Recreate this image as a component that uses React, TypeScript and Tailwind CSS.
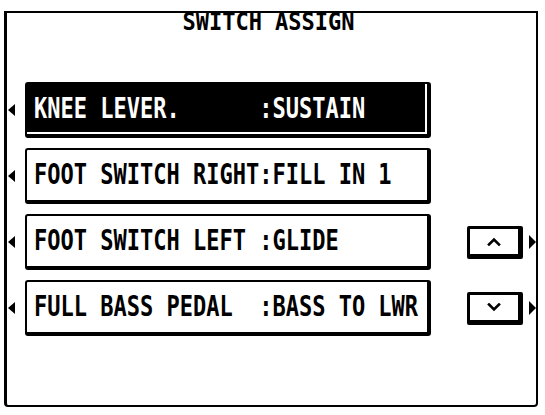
import React from "react";

type Row = { text: string; selected?: boolean; button?: "up" | "down" };

const rows: Row[] = [
  { text: "KNEE LEVER.      :SUSTAIN", selected: true },
  { text: "FOOT SWITCH RIGHT:FILL IN 1" },
  { text: "FOOT SWITCH LEFT :GLIDE", button: "up" },
  { text: "FULL BASS PEDAL  :BASS TO LWR", button: "down" },
];

const lcd = "font-['DejaVu_Sans_Mono','Liberation_Mono',monospace] font-bold text-[22px] leading-[22px] whitespace-pre";

function LeftArrow() {
  return <span className="ml-[1px] h-0 w-0 border-y-[6px] border-r-[7px] border-y-transparent border-r-black" />;
}

function RightArrow() {
  return <span className="ml-[6px] h-0 w-0 border-y-[7px] border-l-[7px] border-y-transparent border-l-black" />;
}

function ScrollButton({ dir }: { dir: "up" | "down" }) {
  return (
    <div className="ml-[36px] flex h-[33px] w-[56px] items-center justify-center rounded-[2px] border-t-[3px] border-l-[3px] border-r-[5px] border-b-[5px] border-black bg-white">
      <svg width="16" height="9" viewBox="0 0 16 9" fill="none" stroke="black" strokeWidth="2.6" strokeLinecap="square">
        {dir === "up" ? <path d="M3 7.5 L8 2.5 L13 7.5" /> : <path d="M3 1.5 L8 6.5 L13 1.5" />}
      </svg>
    </div>
  );
}

function AssignRow({ row }: { row: Row }) {
  return (
    <div className="flex h-[56px] items-center">
      <LeftArrow />
      <div
        className={
          row.selected
            ? "ml-[10px] flex h-full w-[406px] items-center rounded-[3px] border-t-2 border-l-2 border-r-[4px] border-b-[4px] border-black bg-black pl-[7px] text-white shadow-[inset_-2px_-2px_0_#fff]"
            : "ml-[10px] flex h-full w-[406px] items-center rounded-[3px] border-t-2 border-l-2 border-r-[4px] border-b-[4px] border-black bg-white pl-[7px] text-black"
        }
      >
        <span className={`${lcd} inline-block scale-y-[1.3]`}>{row.text}</span>
      </div>
      {row.button && (
        <>
          <ScrollButton dir={row.button} />
          <RightArrow />
        </>
      )}
    </div>
  );
}

export default function App() {
  return (
    <div className="h-[415px] w-[545px] overflow-hidden bg-white pt-[11px] pl-[4px]">
      <div className="flex h-[396px] w-[534px] flex-col rounded-b-[4px] border-t-2 border-l-[3px] border-r-2 border-b-2 border-black">
        <div className="-mt-[2px] flex h-[22px] justify-center pr-[6px] text-black">
          <span className={`${lcd} inline-block scale-y-[1.15]`}>SWITCH ASSIGN</span>
        </div>
        <div className="mt-[49px] flex flex-col gap-[10px]">
          {rows.map((r) => (
            <AssignRow key={r.text} row={r} />
          ))}
        </div>
      </div>
    </div>
  );
}
